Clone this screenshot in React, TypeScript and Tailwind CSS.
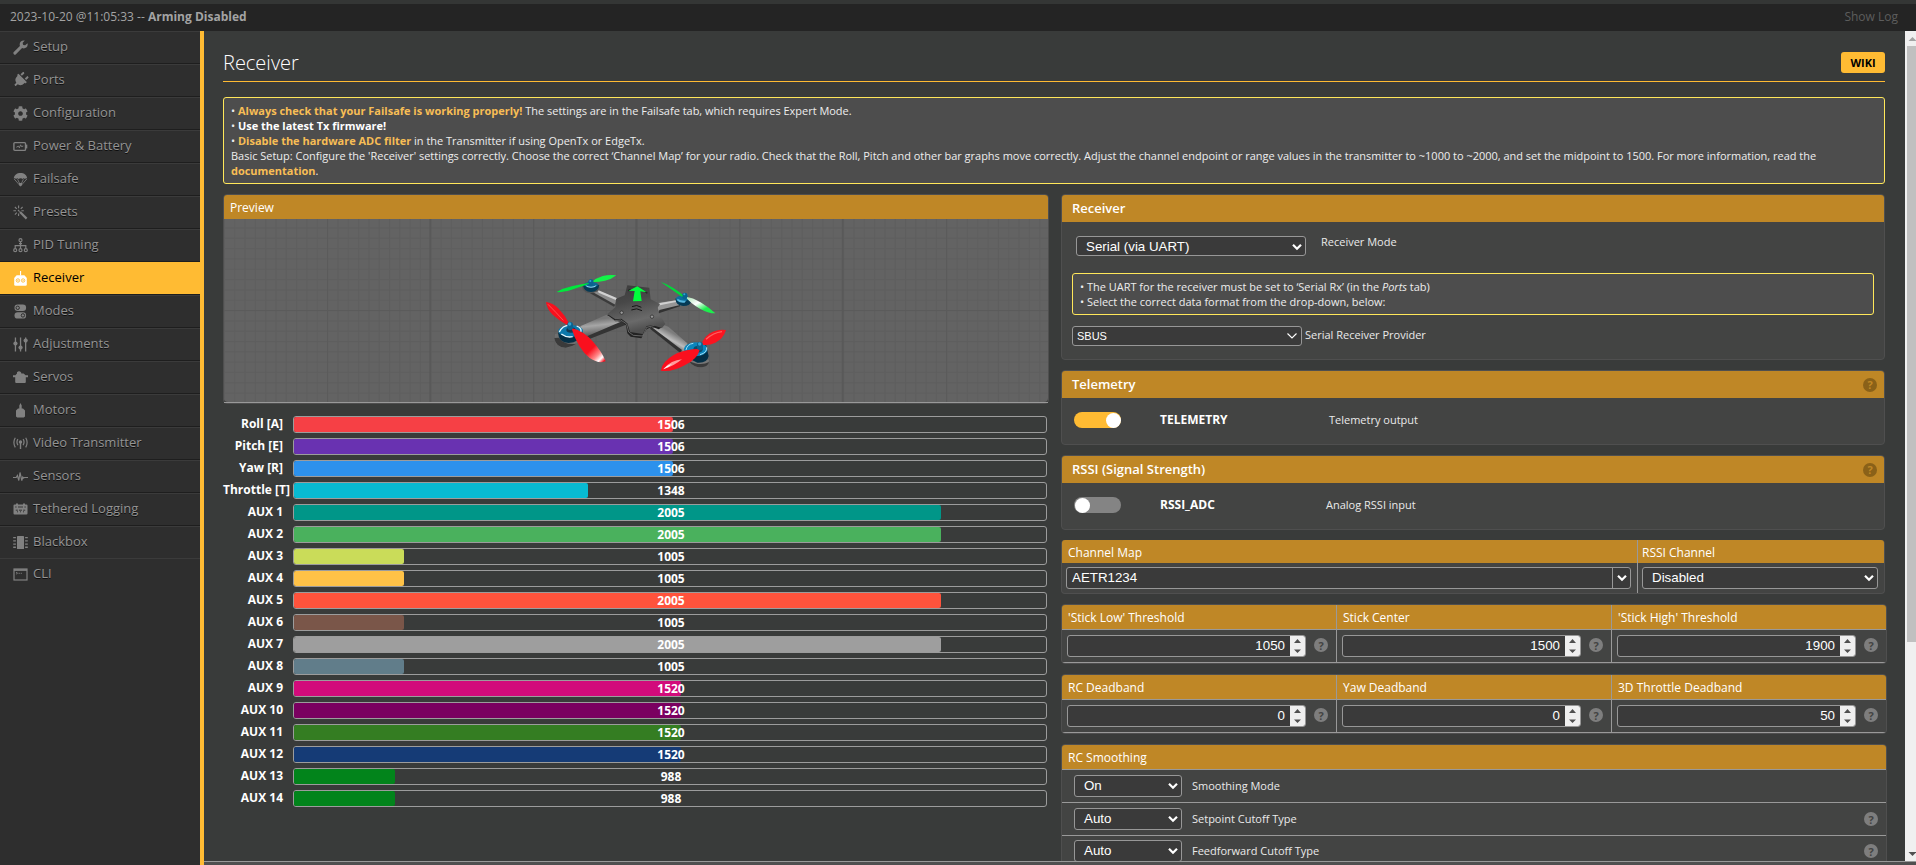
import React from "react";
import { FaWrench, FaPlug, FaCog } from "react-icons/fa";

const NAV = [
  "Setup",
  "Ports",
  "Configuration",
  "Power & Battery",
  "Failsafe",
  "Presets",
  "PID Tuning",
  "Receiver",
  "Modes",
  "Adjustments",
  "Servos",
  "Motors",
  "Video Transmitter",
  "Sensors",
  "Tethered Logging",
  "Blackbox",
  "CLI",
];

const CHANNELS: { label: string; value: number; color: string }[] = [
  { label: "Roll [A]", value: 1506, color: "bg-[#f64045]" },
  { label: "Pitch [E]", value: 1506, color: "bg-[#6932b1]" },
  { label: "Yaw [R]", value: 1506, color: "bg-[#2d91ec]" },
  { label: "Throttle [T]", value: 1348, color: "bg-[#08bad2]" },
  { label: "AUX 1", value: 2005, color: "bg-[#009688]" },
  { label: "AUX 2", value: 2005, color: "bg-[#4ab15d]" },
  { label: "AUX 3", value: 1005, color: "bg-[#cadc59]" },
  { label: "AUX 4", value: 1005, color: "bg-[#ffc247]" },
  { label: "AUX 5", value: 2005, color: "bg-[#ff533c]" },
  { label: "AUX 6", value: 1005, color: "bg-[#7a5649]" },
  { label: "AUX 7", value: 2005, color: "bg-[#9e9e9e]" },
  { label: "AUX 8", value: 1005, color: "bg-[#617d8a]" },
  { label: "AUX 9", value: 1520, color: "bg-[#d20b7b]" },
  { label: "AUX 10", value: 1520, color: "bg-[#7a0060]" },
  { label: "AUX 11", value: 1520, color: "bg-[#347d22]" },
  { label: "AUX 12", value: 1520, color: "bg-[#153b76]" },
  { label: "AUX 13", value: 988, color: "bg-[#02841b]" },
  { label: "AUX 14", value: 988, color: "bg-[#02841b]" },
];

const RANGE_MIN = 800;
const RANGE_MAX = 2200;

function NavIcon({ name }: { name: string }) {
  switch (name) {
    case "Setup":
      return (
        <svg viewBox="0 0 15 15" className="h-[15px] w-[15px]" fill="none" stroke="currentColor">
          <path d="M1.900 13.100L9.200 5.800" strokeWidth="3" strokeLinecap="round" />
          <path
            d="M11.800 0.500L9.700 2.800 10 5l2.200.300 2.300-2.100Q15.200 6 13.300 7.600 11.300 9 9 8L7 6Q6.100 3.800 7.600 1.800 9.300 0 11.800.5z"
            fill="currentColor"
            stroke="none"
          />
        </svg>
      );
    case "Ports":
      return <FaPlug className="h-4 w-[15px] rotate-45" />;
    case "Configuration":
      return <FaCog className="h-[15px] w-[15px]" />;
    case "Power & Battery":
      return (
        <svg viewBox="0 0 15 15" className="h-[15px] w-[15px]" fill="none" stroke="currentColor">
          <rect x="0.9" y="3.6" width="11.6" height="7.8" rx="1" strokeWidth="1.4" />
          <path d="M13.6 5.6v3.8" strokeWidth="1.4" />
          <path d="M3.400 8.200l2-1 1 1.600 1.200-3 .900 1.800 1.800-.6" strokeWidth="1" />
        </svg>
      );
    case "Failsafe":
      return (
        <svg viewBox="0 0 15 15" className="h-[15px] w-[15px]" fill="currentColor">
          <path d="M0.8 6.6C1 3 4 1 7.5 1s6.500 2 6.700 5.600q-1.200-.8-2.300.3-1.200-1.200-2.300 0-1.600-1.400-4.200 0-1.100-1.200-2.300 0-1.100-1.100-2.300-.3z" />
          <path d="M1.200 7l5.300 6M13.800 7l-5.300 6M4.600 7.200l2.300 5M10.400 7.200l-2.300 5" stroke="currentColor" strokeWidth="0.8" fill="none" />
          <path d="M6 11h3v2.200L7.500 14.600 6 13.200z" />
        </svg>
      );
    case "Presets":
      return (
        <svg viewBox="0 0 15 15" className="h-[15px] w-[15px]" fill="none" stroke="currentColor">
          <path d="M7 7l6.600 6.600" strokeWidth="2.200" />
          <path d="M5.600 0.600v2.600M5.600 8.400V11M0.400 5.800H3M8.400 5.800h2.400M1.900 2l1.900 1.900M9.600 2L7.700 3.900M1.900 9.600l1.900-1.900M5 5l1.600 1.600" strokeWidth="1.100" />
        </svg>
      );
    case "PID Tuning":
      return (
        <svg viewBox="0 0 15 15" className="h-[15px] w-[15px]" fill="none" stroke="currentColor" strokeWidth="1.200">
          <circle cx="7.500" cy="2.200" r="1.500" />
          <path d="M7.500 3.800v6.600M2.200 10.400V7.600h10.600v2.800M6 5.600h3" />
          <circle cx="2.200" cy="12.200" r="1.500" />
          <circle cx="7.500" cy="12.200" r="1.500" />
          <circle cx="12.800" cy="12.200" r="1.500" />
        </svg>
      );
    case "Receiver":
      return (
        <svg viewBox="0 0 15 15" className="h-[15px] w-[15px]">
          <path d="M7 0h1.100v4.500H7z" fill="currentColor" />
          <path d="M3.600 4.200h7.800L13.800 7v6.500q0 1.300-1.300 1.300h-10q-1.300 0-1.300-1.300V7z" fill="currentColor" />
          <g fill="none" stroke="#ffbb33" strokeWidth="0.900">
            <circle cx="4.900" cy="9.500" r="1.700" />
            <circle cx="10.100" cy="9.500" r="1.700" />
          </g>
          <g fill="#ffbb33">
            <circle cx="4.900" cy="9.500" r="0.600" />
            <circle cx="10.100" cy="9.500" r="0.600" />
          </g>
        </svg>
      );
    case "Modes":
      return (
        <svg viewBox="0 0 15 15" className="h-[15px] w-[15px]">
          <rect x="1.500" y="0.600" width="11.600" height="6.400" rx="3.200" fill="currentColor" />
          <rect x="1.500" y="8.200" width="11.600" height="6.400" rx="3.200" fill="currentColor" />
          <circle cx="4.700" cy="3.800" r="1.700" fill="none" stroke="#2e2e2e" />
          <circle cx="9.900" cy="11.400" r="1.700" fill="none" stroke="#2e2e2e" />
        </svg>
      );
    case "Adjustments":
      return (
        <svg viewBox="0 0 15 15" className="h-[15px] w-[15px]" fill="currentColor">
          <path d="M1.800 0.500h1.300v14H1.800zM6.900 0.500h1.300v14H6.900zM12 0.500h1.300v14H12z" />
          <circle cx="2.450" cy="6.500" r="2.100" />
          <circle cx="7.550" cy="10.600" r="2.100" />
          <circle cx="12.650" cy="3.600" r="2.100" />
        </svg>
      );
    case "Servos":
      return (
        <svg viewBox="0 0 15 15" className="h-[15px] w-[15px]" fill="currentColor">
          <path d="M0 5.200h2.400L4 3.600V2.200Q6 .2 8 2.200l.4 1.400h2.200L12.600 5.200H15v2h-2.200V12q0 1-1 1H3.200q-1 0-1-1V7.200H0z" />
        </svg>
      );
    case "Motors":
      return (
        <svg viewBox="0 0 15 15" className="h-[15px] w-[15px]" fill="currentColor">
          <path d="M7.500 0l1.200 2.400v3.200H10l2 1.800v6.200l-1.200.9H4.200L3 13.600V7.400l2-1.800h1.300V2.400z" />
        </svg>
      );
    case "Video Transmitter":
      return (
        <svg viewBox="0 0 15 15" className="h-[15px] w-[15px]" fill="none" stroke="currentColor" strokeWidth="1.200">
          <circle cx="7.500" cy="6" r="1.100" fill="currentColor" />
          <path d="M7.500 6v7" strokeWidth="1.400" />
          <path d="M4.900 3.200q-1.900 2.800 0 6M10.100 3.200q1.900 2.800 0 6M2.300 1.800Q-.5 6.200 2.300 11.400M12.700 1.800q2.800 4.400 0 9.600" />
        </svg>
      );
    case "Sensors":
      return (
        <svg viewBox="0 0 15 15" className="h-[15px] w-[15px]" fill="none" stroke="currentColor" strokeWidth="1.200">
          <path d="M0 8.500h3.200l1.200-2 1.400 5 1.200-8 1.800 8 1-3.500.8 1 .8-.5H15" />
        </svg>
      );
    case "Tethered Logging":
      return (
        <svg viewBox="0 0 15 15" className="h-[15px] w-[15px]">
          <path d="M1.500 2.400H3v-.8h2v.8h5v-.8h2v.8h1.500q1 0 1 1v8q0 1-1 1h-12q-1 0-1-1v-8q0-1 1-1z" fill="currentColor" />
          <path d="M2.200 5h1.400M5 5h5M11.400 5h1.400M2.800 8.200h2M6 8.200h3M10.200 8.200h2M4 9.800h1M7 9.800h1M10 9.800h1" stroke="#2e2e2e" strokeWidth="0.900" />
        </svg>
      );
    case "Blackbox":
      return (
        <svg viewBox="0 0 15 15" className="h-[15px] w-[15px]" fill="currentColor">
          <rect x="4" y="1" width="7" height="13" rx="0.600" />
          <path d="M0.200 2h2.700v1.300H.2zM0.200 5.200h2.700v1.300H.2zM0.200 8.400h2.700v1.300H.2zM0.200 11.600h2.700v1.300H.2zM12.100 2h2.700v1.300h-2.700zM12.100 5.200h2.700v1.300h-2.700zM12.100 8.400h2.700v1.300h-2.700zM12.100 11.600h2.700v1.300h-2.700z" />
        </svg>
      );
    default:
      return (
        <svg viewBox="0 0 15 15" className="h-[15px] w-[15px]" fill="none" stroke="currentColor">
          <rect x="1" y="2" width="13" height="11" strokeWidth="1.200" />
          <path d="M1 3h13" strokeWidth="1.800" />
          <path d="M3 5.200l1.600 1L3 7.200M5.500 6.300h1.400M7.700 6.300h1.300" strokeWidth="0.800" />
        </svg>
      );
  }
}

function Sidebar() {
  return (
    <nav className="flex h-[834px] w-[204px] shrink-0 flex-col border-r-4 border-[#ffbb33] bg-[#2e2e2e]">
      {NAV.map((name, i) => {
        const active = name === "Receiver";
        const last = i >= NAV.length - 2;
        return (
          <div
            key={name}
            className={
              "flex shrink-0 items-center border-t pl-[13px] text-[13px] " +
              (last ? "h-8 " : "h-[33px] border-b border-b-[#1e1e1e] ") +
              (active
                ? "border-t-[#ffbb33] bg-[#ffbb33] text-black"
                : "border-t-[#3b3b3b] text-[#949494] [text-shadow:0_1px_rgba(0,0,0,0.7)]")
            }
          >
            <span className={"pb-px " + (active ? "text-white" : "text-[#818181]")}>
              <NavIcon name={name} />
            </span>
            <span className="ml-[5px] pb-[2px] leading-none">{name}</span>
          </div>
        );
      })}
    </nav>
  );
}

function Help({ dark }: { dark?: boolean }) {
  return (
    <span
      className={
        "flex h-[14px] w-[14px] shrink-0 items-center justify-center rounded-full text-[11px] leading-none font-bold " +
        (dark ? "bg-[#8a6118] text-[#bf8726]" : "bg-[#7e7e7e] text-[#434443]")
      }
    >
      ?
    </span>
  );
}

function Chevron({ thin }: { thin?: boolean }) {
  return (
    <svg viewBox="0 0 10 8" className="h-2 w-[10px] shrink-0" fill="none" stroke="#fff">
      <path d={thin ? "M0.500 1.500L5 6l4.500-4.500" : "M1 1.800l4 4 4-4"} strokeWidth={thin ? 1.1 : 2.2} />
    </svg>
  );
}

function Select({ value, className }: { value: string; className: string }) {
  return (
    <div
      className={
        "flex items-center justify-between rounded-[3px] border border-[#979797] bg-[#3a3a3a] pr-[3px] pl-[9px] font-['Liberation_Sans',Arial,sans-serif] text-[13.333px] leading-none text-white " +
        className
      }
    >
      <span>{value}</span>
      <Chevron />
    </div>
  );
}

function Drone() {
  return (
    <g transform="translate(276 31) scale(0.33333)">
      {/* rear arms */}
      <path d="M285 118L352 146 342 168 270 126z" fill="#8b8b8b" />
      <path d="M292 119L352 145 349 151 296 128z" fill="#d2d2d2" />
      <path d="M278 126L346 164 342 170 270 130z" fill="#3b3b3b" />
      <path d="M470 160L545 148 548 166 476 184z" fill="#969696" />
      <path d="M476 160L530 151 531 155 480 166z" fill="#d0d0d0" />
      <path d="M478 180L540 165 540 169 476 190z" fill="#323232" />
      {/* rear motors */}
      <path d="M246 108q0 20 26 22 26-2 28-18z" fill="#555" />
      <path d="M249 104q2 22 24 22t25-20l-12-6h-28z" fill="#053a55" />
      <ellipse cx="273" cy="104" rx="21" ry="8" fill="#0b6793" />
      <path d="M256 105q17 10 34 0l-5 6q-12 4-24 0z" fill="#8fd6f2" />
      <ellipse cx="273" cy="98" rx="9" ry="9" fill="#0a6c9d" />
      <path d="M526 146q2 22 24 22t24-16l-20-20z" fill="#053a55" />
      <ellipse cx="546" cy="146" rx="18" ry="9" fill="#0d6f9e" />
      <path d="M532 146q12 8 26 6l-4 6q-14 2-22-6z" fill="#56b7df" />
      <ellipse cx="554" cy="138" rx="9" ry="9" fill="#0a6c9d" />
      {/* front arms */}
      <path d="M320 194L362 218 268 264 232 262 242 228z" fill="url(#armLeft)" />
      <path d="M366 214L378 224 270 266 254 262z" fill="#343434" />
      <path d="M482 222L505 230 562 280 556 312 536 296 456 236z" fill="url(#armRight)" />
      <path d="M454 230L546 300 540 308 450 236z" fill="#303030" />
      {/* frame plates */}
      <path d="M322 196L346 214 364 214 378 226 382 250 392 260 424 265 440 238 456 230 476 238 486 232 480 220 340 184z" fill="#222" />
      <path d="M324 198L344 212 362 210 380 222 386 246 400 256 428 258 440 232 464 226" fill="none" stroke="#858585" strokeWidth="2" />
      <path d="M382 106L448 113 452 148 480 162 470 178 496 222 486 234 458 226 440 228 428 252 390 246 382 220 364 206 346 208 322 192 346 172 348 146 374 136z" fill="url(#plate)" />
      <path d="M396 170q14-8 28 2M394 180q16-8 32 2" fill="none" stroke="#151515" strokeWidth="3" />
      <circle cx="365" cy="188" r="5" fill="#999" stroke="#222" strokeWidth="2" />
      <circle cx="456" cy="200" r="5" fill="#999" stroke="#222" strokeWidth="2" />
      <path d="M384 122l8-4M442 130l-8-6" stroke="#222" strokeWidth="4" />
      <path d="M412 109L440 127 421 124 425 153 399 154 404 123 386 122z" fill="#00ff3c" />
      {/* front-left motor */}
      <path d="M165 252q-6 36 26 41 30 0 43-18l-20-28z" fill="#6f6f6f" />
      <path d="M163 264q4 28 34 29 18-2 32-12-34 6-52-18z" fill="#3a3a3a" />
      <path d="M174 248q2 30 32 31 32-2 42-28l-2-14z" fill="#052f45" />
      <ellipse cx="212" cy="243" rx="37" ry="18" fill="#0b78ab" />
      <path d="M178 246q10-20 28-20M184 252q16 12 34 8M240 250q10-14-10-22" fill="none" stroke="#e6f8ff" strokeWidth="4" />
      <ellipse cx="213" cy="240" rx="14" ry="8" fill="#123a53" />
      {/* front-right motor */}
      <path d="M562 318q10 34 42 34 22-3 23-22z" fill="#777" />
      <path d="M566 332q14 20 38 20 20-2 23-16-26 14-61-4z" fill="#3a3a3a" />
      <path d="M556 292q0 34 36 46 30 2 34-20l-8-34z" fill="#052f45" />
      <ellipse cx="587" cy="298" rx="35" ry="21" fill="#0b86bd" />
      <path d="M558 300q4-18 22-20M600 314q22-6 20-22" fill="none" stroke="#a5e0f5" strokeWidth="3" />
      <ellipse cx="594" cy="298" rx="14" ry="10" fill="#0f4a69" />
      {/* propellers */}
      <path d="M271 100q-34 12-58 20-28 8-43 6 20-12 48-18 26-6 53-10z" fill="#00e83c" />
      <path d="M276 96q12-12 32-18 20-5 41-2-14 12-34 16-22 5-39 4z" fill="#12f548" />
      <path d="M482 96q16 4 38 18 20 12 32 24l-6 2q-14-8-32-22-20-14-32-22z" fill="#00d93a" />
      <path d="M556 140q22 2 48 18 26 16 42 32-22 0-46-14-26-14-44-36z" fill="url(#propGreen)" />
      <path d="M138 156q20 2 38 20 20 20 32 46l-8 2q-22-12-42-30-18-18-20-38z" fill="#f8101e" />
      <path d="M144 163q24 24 46 48" stroke="#ff5050" strokeWidth="3" fill="none" />
      <path d="M214 234q36 8 64 40 28 32 39 60-22 8-48-10-34-26-55-90z" fill="url(#propLeft)" />
      <path d="M604 284q6-20 26-34 22-14 48-10-8 26-32 38-20 10-42 6z" fill="#fb1420" />
      <path d="M618 268q22-20 48-23" stroke="#ff6060" strokeWidth="4" fill="none" />
      <path d="M600 296q-6 30-46 50-40 22-72 16 6-28 38-46 32-20 80-20z" fill="#fa101e" />
      <path d="M546 328q-24 20-56 30 10-14 26-22 14-6 30-8z" fill="#ff9c9c" />
      <path d="M516 342q-10 10-26 16 8-10 26-16z" fill="#fff" />
      {/* hubs */}
      <g fill="#0a638f">
        <rect x="266" y="88" width="14" height="20" rx="6" />
        <rect x="548" y="128" width="13" height="20" rx="6" />
        <rect x="202" y="216" width="17" height="24" rx="8" />
        <rect x="591" y="276" width="18" height="24" rx="8" />
      </g>
      <g fill="#35a3d2">
        <circle cx="271" cy="93" r="3" />
        <circle cx="553" cy="133" r="3" />
        <circle cx="209" cy="222" r="5" />
        <circle cx="599" cy="282" r="5" />
      </g>
    </g>
  );
}

function Preview() {
  const minorX = Array.from({ length: 80 }, (_, i) => 0.4 + i * 10.32);
  const minorY = Array.from({ length: 18 }, (_, i) => 9 + i * 10.32);
  return (
    <section className="h-[210px] w-[826px] rounded-[4px] border border-[#4f4f4f]">
      <h2 className="flex h-6 items-center rounded-t-[3px] bg-[#bf8726] pt-[2px] pl-[6px] text-[12px] leading-none text-white">
        Preview
      </h2>
      <svg viewBox="0 0 824 183" className="block h-[183px] w-[824px] rounded-b-[4px]">
        <defs>
          <linearGradient id="plate" x1="0" y1="0" x2="0.300" y2="1">
            <stop offset="0" stopColor="#3a3a3a" />
            <stop offset="0.400" stopColor="#484848" />
            <stop offset="0.800" stopColor="#6a6a6a" />
            <stop offset="1" stopColor="#505050" />
          </linearGradient>
          <linearGradient id="armLeft" x1="0.400" y1="0" x2="0.600" y2="1">
            <stop offset="0.200" stopColor="#777" />
            <stop offset="0.450" stopColor="#a6a6a6" />
            <stop offset="0.900" stopColor="#555" />
          </linearGradient>
          <linearGradient id="armRight" x1="0.700" y1="0.200" x2="0.300" y2="0.800">
            <stop offset="0.200" stopColor="#7c7c7c" />
            <stop offset="0.500" stopColor="#bcbcbc" />
            <stop offset="0.800" stopColor="#5a5a5a" />
          </linearGradient>
          <linearGradient id="propGreen" x1="0" y1="0" x2="1" y2="1">
            <stop offset="0.100" stopColor="#b8e8c0" />
            <stop offset="0.400" stopColor="#fff" />
            <stop offset="0.700" stopColor="#1dee4e" />
          </linearGradient>
          <linearGradient id="propLeft" x1="0" y1="0" x2="1" y2="1">
            <stop offset="0.600" stopColor="#fa101e" />
            <stop offset="0.780" stopColor="#ff8a8a" />
            <stop offset="0.880" stopColor="#fff" />
            <stop offset="0.960" stopColor="#fa101e" />
          </linearGradient>
        </defs>
        <rect width="824" height="183" fill="#636363" />
        <g stroke="#5f5f5f" strokeWidth="1">
          {minorX.map((x) => (
            <path key={x} d={`M${x} 0V183`} />
          ))}
          {minorY.map((y) => (
            <path key={y} d={`M0 ${y}H824`} />
          ))}
        </g>
        <g stroke="#5b5b5b">
          <path d="M103.500 0V183M309.500 0V183M515.500 0V183M722.500 0V183M0 91.500H824" />
          <path d="M206.300 0V183M412.300 0V183M618.700 0V183" stroke="#595959" strokeWidth="1.800" />
        </g>
        <Drone />
      </svg>
      <div className="h-px bg-[#999]" />
    </section>
  );
}

function ChannelBars() {
  return (
    <div className="mt-3 flex flex-col gap-[5px]">
      {CHANNELS.map((c) => (
        <div key={c.label} className="flex h-[17px] text-[12px] leading-[15px] font-bold text-white">
          <div className="w-[60px] text-right whitespace-nowrap">{c.label}</div>
          <div className="ml-[10px] grid w-[754px] rounded-[3px] border border-[#9c9c9c]">
            <div
              className={"col-start-1 row-start-1 h-[15px] rounded-[2px] " + c.color}
              style={{ width: `${((c.value - RANGE_MIN) / (RANGE_MAX - RANGE_MIN)) * 100}%` }}
            />
            <div className="col-start-1 row-start-1 pl-[2px] text-center">{c.value}</div>
          </div>
        </div>
      ))}
    </div>
  );
}

function TitledBox({
  title,
  help,
  className,
  children,
}: {
  title: string;
  help?: boolean;
  className: string;
  children: React.ReactNode;
}) {
  return (
    <section className={"w-[824px] rounded-[4px] border border-[#4f4f4f] bg-[#434443] " + className}>
      <h2 className="flex h-[27px] items-center justify-between rounded-t-[3px] bg-[#bf8726] pr-[7px] pl-[10px] text-[13px] font-semibold text-white">
        {title}
        {help && <Help dark />}
      </h2>
      {children}
    </section>
  );
}

function Toggle({ on }: { on?: boolean }) {
  return (
    <span
      className={
        "flex h-4 w-[47px] items-center rounded-full px-[0.5px] " + (on ? "justify-end bg-[#ffbb33]" : "bg-[#848484]")
      }
    >
      <span className="h-[15px] w-[15px] rounded-full bg-white" />
    </span>
  );
}

function ToggleRow({ on, name, text, gap }: { on?: boolean; name: string; text: string; gap: string }) {
  return (
    <div className="flex h-4 items-center pl-[12px]">
      <Toggle on={on} />
      <span className={"ml-[39px] text-[12px] leading-none font-bold text-white " + gap}>{name}</span>
      <span className="pb-[2px] text-[11px] leading-none text-[#eaeaea]">{text}</span>
    </div>
  );
}

function NumberField({ value }: { value: string }) {
  return (
    <div className="flex h-8 items-center pl-[5px]">
      <div className="flex h-[22px] w-[239px] items-center justify-end overflow-hidden rounded-[3px] border border-[#979797] bg-[#3a3a3a]">
        <span className="mr-[5px] font-['Liberation_Sans',Arial,sans-serif] text-[13.333px] leading-none text-white">
          {value}
        </span>
        <span className="flex h-5 w-[15px] items-center justify-center bg-[#efefef]">
          <svg viewBox="0 0 15 20" className="h-5 w-[15px]" fill="#505050">
            <path d="M7.500 3L11 7H4zM7.500 17L11 13.500H4z" />
          </svg>
        </span>
      </div>
      <div className="ml-2 pb-[2px]">
        <Help />
      </div>
    </div>
  );
}

function FieldTable({ fields }: { fields: [string, string][] }) {
  return (
    <section className="mt-[10px] h-[60px] w-[826px] overflow-hidden rounded-[4px] border border-[#4f4f4f] bg-[#434443]">
      <div className="grid h-[58px] grid-cols-[275px_275px_274px] border-b border-[#999]">
        {fields.map(([label, value], i) => (
          <div key={label} className={i < 2 ? "border-r border-[#999]" : ""}>
            <div className="flex h-[25px] items-center border-b border-[#999] bg-[#bf8726] pt-[2px] pl-[6px] text-[12px] leading-none text-white">
              {label}
            </div>
            <NumberField value={value} />
          </div>
        ))}
      </div>
    </section>
  );
}

function SmoothingRow({ value, label, help, short }: { value: string; label: string; help?: boolean; short?: boolean }) {
  return (
    <div
      className={
        "flex shrink-0 items-center pr-2 pl-[12px] " + (short ? "h-[30px]" : "h-[33px] border-b border-[#999]")
      }
    >
      <Select value={value} className="h-[22px] w-[108px]" />
      <span className="ml-[10px] grow pb-[2px] text-[11px] leading-none text-[#eaeaea]">{label}</span>
      {help && <Help />}
    </div>
  );
}

function RightColumn() {
  return (
    <div className="w-[826px] shrink-0">
      <TitledBox title="Receiver" className="h-[166px]">
        <div className="flex pt-[14px] pl-[14px]">
          <Select value="Serial (via UART)" className="h-5 w-[230px] pt-px" />
          <span className="-mt-px ml-[15px] text-[11px] leading-[13px] text-[#eaeaea]">Receiver Mode</span>
        </div>
        <div className="mt-[17px] ml-[10px] h-[42px] w-[802px] rounded-[3px] border border-[#ffe75a] bg-[#4d4d4d] px-[7px] py-[5px] text-[10.98px] leading-[15px] text-[#ededed]">
          <p>
            • The UART for the receiver must be set to ‘Serial Rx’ (in the <em>Ports</em> tab)
          </p>
          <p>• Select the correct data format from the drop-down, below:</p>
        </div>
        <div className="mt-[11px] flex pl-[10px]">
          <div className="flex h-5 w-[230px] items-center justify-between rounded-[3px] border border-[#979797] bg-[#3a3a3a] pr-1 pl-1 font-['Liberation_Sans',Arial,sans-serif] text-[11px] leading-none text-white">
            <span>SBUS</span>
            <Chevron thin />
          </div>
          <span className="ml-[3px] text-[11px] leading-[18px] text-[#eaeaea]">Serial Receiver Provider</span>
        </div>
      </TitledBox>

      <TitledBox title="Telemetry" help className="mt-[10px] h-[75px]">
        <div className="pt-[14px]">
          <ToggleRow on name="TELEMETRY" text="Telemetry output" gap="w-[169px]" />
        </div>
      </TitledBox>

      <TitledBox title="RSSI (Signal Strength)" help className="mt-[10px] h-[75px]">
        <div className="pt-[14px]">
          <ToggleRow name="RSSI_ADC" text="Analog RSSI input" gap="w-[166px]" />
        </div>
      </TitledBox>

      <section className="mt-[10px] flex h-[54px] w-[824px] rounded-[4px] border-x border-b border-[#4f4f4f] bg-[#434443]">
        <div className="w-[576px] border-r border-[#999]">
          <h2 className="flex h-[23px] items-center rounded-tl-[3px] bg-[#bf8726] pt-[2px] pl-[6px] text-[12px] leading-none text-white">
            Channel Map
          </h2>
          <div className="mt-1 ml-1 flex h-[22px] w-[565px] items-center rounded-[3px] border border-[#979797] bg-[#3a3a3a]">
            <span className="grow pl-[5px] font-['Liberation_Sans',Arial,sans-serif] text-[13.333px] leading-none text-white">
              AETR1234
            </span>
            <span className="flex h-5 w-[18px] items-center justify-center border-l border-[#979797]">
              <Chevron />
            </span>
          </div>
        </div>
        <div className="grow">
          <h2 className="flex h-[23px] items-center rounded-tr-[3px] bg-[#bf8726] pt-[2px] pl-1 text-[12px] leading-none text-white">
            RSSI Channel
          </h2>
          <Select value="Disabled" className="mt-1 ml-1 h-[22px] w-[236px]" />
        </div>
      </section>

      <FieldTable
        fields={[
          ["'Stick Low' Threshold", "1050"],
          ["Stick Center", "1500"],
          ["'Stick High' Threshold", "1900"],
        ]}
      />
      <FieldTable
        fields={[
          ["RC Deadband", "0"],
          ["Yaw Deadband", "0"],
          ["3D Throttle Deadband", "50"],
        ]}
      />

      <section className="mt-[10px] w-[826px] rounded-t-[4px] border border-[#4f4f4f] bg-[#434443]">
        <h2 className="flex h-[25px] items-center rounded-t-[3px] border-b border-[#999] bg-[#bf8726] pt-[2px] pl-[6px] text-[12px] leading-none text-white">
          RC Smoothing
        </h2>
        <SmoothingRow value="On" label="Smoothing Mode" />
        <SmoothingRow value="Auto" label="Setpoint Cutoff Type" help />
        <SmoothingRow value="Auto" label="Feedforward Cutoff Type" help short />
      </section>
    </div>
  );
}

function Scrollbar() {
  return (
    <div className="flex h-full w-[11px] shrink-0 flex-col overflow-hidden bg-[#f0f0f0] pl-[2px]">
      <svg viewBox="0 0 13 15" className="h-[15px] w-[13px] shrink-0" fill="#a3a3a3">
        <path d="M5.500 6L9.500 10h-8z" />
      </svg>
      <div className="h-[596px] w-full shrink-0 bg-[#c0c0c0]" />
      <div className="grow" />
      <svg viewBox="0 0 13 15" className="h-[15px] w-[13px] shrink-0" fill="#505050">
        <path d="M5.500 10L9.500 6h-8z" />
      </svg>
    </div>
  );
}

export default function App() {
  const accent = "font-bold text-[#f8be55]";
  return (
    <div className="flex h-[865px] w-[1916px] flex-col overflow-hidden bg-[#393b3a] font-['Open_Sans',sans-serif]">
      <div className="h-1 shrink-0 bg-[#343635]" />
      <header className="flex h-[27px] shrink-0 items-center justify-between bg-[#242424] pr-[18px] pb-px pl-[10px] text-[12px] text-[#a3a3a3]">
        <div>
          2023-10-20 @11:05:33 -- <b>Arming Disabled</b>
        </div>
        <div className="text-[#5d5d5d]">Show Log</div>
      </header>
      <div className="flex h-[834px] shrink-0">
        <Sidebar />
        <div className="flex h-[834px] w-[1712px] flex-col">
          <div className="flex h-[830px] shrink-0 justify-between overflow-hidden">
            <main className="h-[830px] w-[1690px] overflow-hidden pl-[19px]">
              <div className="flex h-[51px] w-[1662px] items-start justify-between border-b border-[#ffbb33]">
                <h1 className="mt-[18px] text-[20px] leading-[27px] font-light text-white">Receiver</h1>
                <span className="mt-[21px] flex h-[21px] w-11 items-center justify-center rounded-[3px] bg-[#ffbb33] pb-px text-[11px] leading-none font-bold text-black">
                  WIKI
                </span>
              </div>
              <div className="mt-[15px] h-[87px] w-[1662px] rounded-[3px] border border-[#ffe75a] bg-[#4d4d4d] py-[5px] pr-[7px] pl-[7px] text-[10.98px] leading-[15px] text-[#ededed]">
                <p>
                  • <b className={accent}>Always check that your Failsafe is working properly!</b> The settings are in the
                  Failsafe tab, which requires Expert Mode.
                </p>
                <p>
                  • <b className="text-white">Use the latest Tx firmware!</b>
                </p>
                <p>
                  • <b className={accent}>Disable the hardware ADC filter</b> in the Transmitter if using OpenTx or
                  EdgeTx.
                </p>
                <p>
                  Basic Setup: Configure the 'Receiver' settings correctly. Choose the correct ‘Channel Map’ for your
                  radio. Check that the Roll, Pitch and other bar graphs move correctly. Adjust the channel endpoint or
                  range values in the transmitter to ~1000 to ~2000, and set the midpoint to 1500. For more information,
                  read the <b className={accent}>documentation</b>.
                </p>
              </div>
              <div className="mt-[10px] flex gap-3">
                <div className="w-[826px] shrink-0">
                  <Preview />
                  <ChannelBars />
                </div>
                <RightColumn />
              </div>
            </main>
            <Scrollbar />
          </div>
          <div className="h-1 shrink-0 border-t border-[#999] bg-[#4f4f4f]" />
        </div>
      </div>
    </div>
  );
}
